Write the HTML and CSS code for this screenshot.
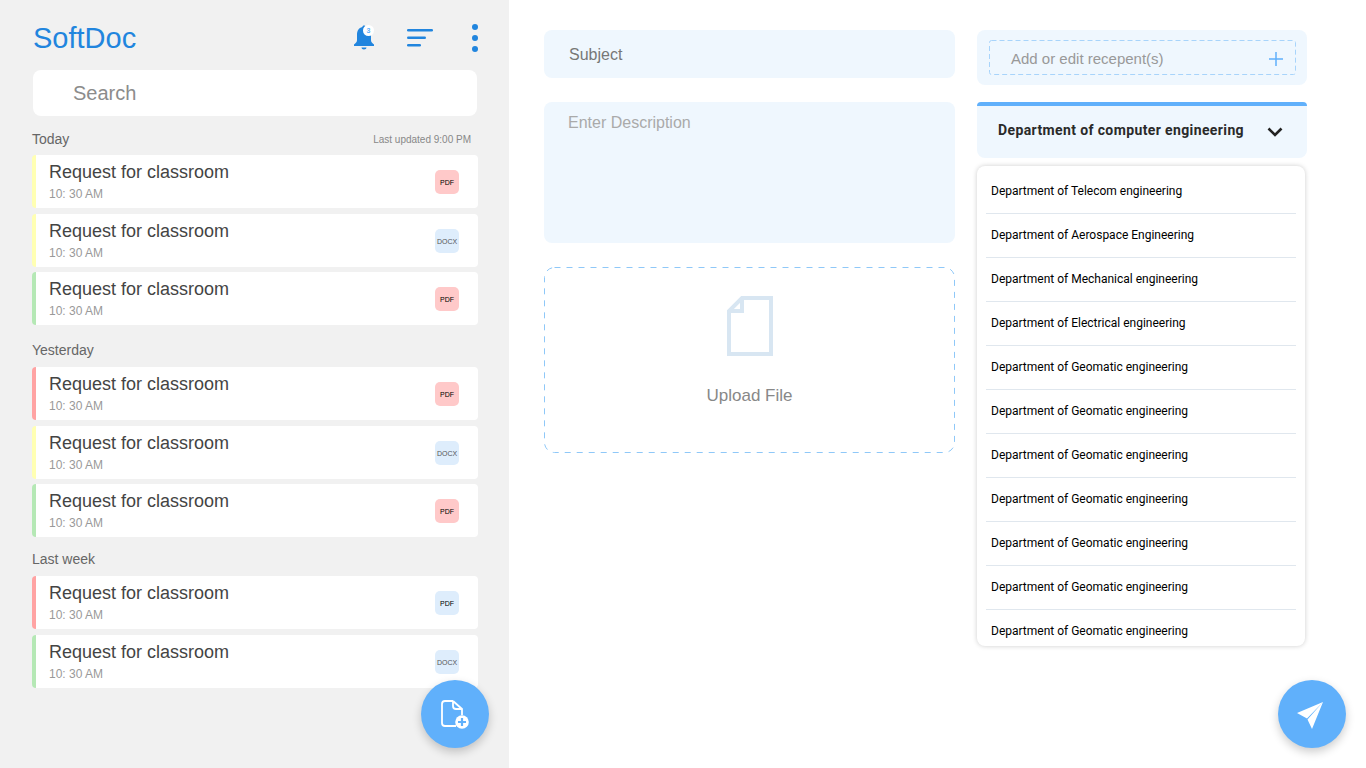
FILE: index.html
```html
<!DOCTYPE html>
<html lang="en">
    <head>
        <meta charset="UTF-8">
        <title>SoftDoc</title>
        <link rel="stylesheet" href="styles.css">
    </head>
    <body>
        <div class="sidebar">
            <div class="top">
                <h1 class="logo">SoftDoc</h1>
                <div class="bell">
                    <svg width="24" height="28" viewBox="0 0 24 28"><path fill="#2185de" d="M12 1.500c1 0 1.600.7 1.700 1.600 3.600.9 5.300 4 5.300 7.600v5.600c0 1.800 1.300 3 3 4.200v1.500H2v-1.500c1.700-1.200 3-2.400 3-4.200v-5.600c0-3.600 1.700-6.700 5.300-7.600.1-.9.7-1.600 1.700-1.600zM9.500 23.500h5c0 1.200-1.100 2-2.500 2s-2.500-.8-2.500-2z"/></svg>
                    <span class="badge">3</span>
                </div>
                <svg class="sort" width="28" height="20" viewBox="0 0 28 20"><g fill="#2185de"><rect y="1" width="26" height="2.600" rx="1.300"/><rect y="8.500" width="19" height="2.600" rx="1.300"/><rect y="16" width="14" height="2.600" rx="1.300"/></g></svg>
                <svg class="dots" width="8" height="28" viewBox="0 0 8 28"><g fill="#2185de"><circle cx="4" cy="3" r="3"/><circle cx="4" cy="14" r="3"/><circle cx="4" cy="25" r="3"/></g></svg>
            </div>

            <div class="search">Search</div>

            <div class="group-head first">
                <span>Today</span>
                <span class="updated">Last updated 9:00 PM</span>
            </div>
            <div class="card yellow"><div class="card-text"><h3>Request for classroom</h3><p>10: 30 AM</p></div><span class="tag pdf">PDF</span></div>
            <div class="card yellow"><div class="card-text"><h3>Request for classroom</h3><p>10: 30 AM</p></div><span class="tag docx">DOCX</span></div>
            <div class="card green"><div class="card-text"><h3>Request for classroom</h3><p>10: 30 AM</p></div><span class="tag pdf">PDF</span></div>

            <div class="group-head"><span>Yesterday</span></div>
            <div class="card red"><div class="card-text"><h3>Request for classroom</h3><p>10: 30 AM</p></div><span class="tag pdf">PDF</span></div>
            <div class="card yellow"><div class="card-text"><h3>Request for classroom</h3><p>10: 30 AM</p></div><span class="tag docx">DOCX</span></div>
            <div class="card green"><div class="card-text"><h3>Request for classroom</h3><p>10: 30 AM</p></div><span class="tag pdf">PDF</span></div>

            <div class="group-head last"><span>Last week</span></div>
            <div class="card red"><div class="card-text"><h3>Request for classroom</h3><p>10: 30 AM</p></div><span class="tag pdf-blue">PDF</span></div>
            <div class="card green"><div class="card-text"><h3>Request for classroom</h3><p>10: 30 AM</p></div><span class="tag docx">DOCX</span></div>

            <button class="fab fab-new">
                <svg width="32" height="30" viewBox="0 0 32 30"><path fill="none" stroke="#fff" stroke-width="1.800" d="M14 2H6a3 3 0 0 0-3 3v19a3 3 0 0 0 3 3h11M14 2l9 8v6M14 2v5a3 3 0 0 0 3 3h6"/><circle cx="23" cy="23" r="6.800" fill="#fff"/><path stroke="#60b0fb" stroke-width="2.200" d="M23 19v8M19 23h8"/></svg>
            </button>
        </div>

        <div class="main">
            <div class="form">
                <div class="subject">Subject</div>
                <div class="description">Enter Description</div>
                <div class="upload">
                    <svg class="frame" width="411" height="186"><rect x=".5" y=".5" width="410" height="185" rx="10" fill="none" stroke="#8fc8f8" stroke-dasharray="6 6"/></svg>
                    <svg width="46" height="60" viewBox="0 0 46 60"><path fill="none" stroke="#d8e6f2" stroke-width="4" d="M15 2h29v56H2V15zM15 2v13H2"/></svg>
                    <span>Upload File</span>
                </div>
            </div>

            <div class="side">
                <div class="recipients">
                    <div class="recipients-inner">
                        <svg class="frame" width="307" height="35"><rect x=".5" y=".5" width="306" height="34" rx="2" fill="none" stroke="#a8d4fb" stroke-dasharray="5 3"/></svg>
                        <span>Add or edit recepent(s)</span>
                        <svg width="14" height="14" viewBox="0 0 14 14"><path stroke="#60b0fb" stroke-width="1.500" d="M7 0v14M0 7h14"/></svg>
                    </div>
                </div>

                <div class="dept-head">
                    <span>Department of computer engineering</span>
                    <svg width="16" height="10" viewBox="0 0 16 10"><path fill="none" stroke="#222" stroke-width="2.600" d="M1.500 1.500 8 8l6.500-6.500"/></svg>
                </div>

                <div class="dept-list">
                    <div class="dept">Department of Telecom engineering</div>
                    <div class="dept">Department of Aerospace Engineering</div>
                    <div class="dept">Department of Mechanical engineering</div>
                    <div class="dept">Department of Electrical engineering</div>
                    <div class="dept">Department of Geomatic engineering</div>
                    <div class="dept">Department of Geomatic engineering</div>
                    <div class="dept">Department of Geomatic engineering</div>
                    <div class="dept">Department of Geomatic engineering</div>
                    <div class="dept">Department of Geomatic engineering</div>
                    <div class="dept">Department of Geomatic engineering</div>
                    <div class="dept">Department of Geomatic engineering</div>
                </div>
            </div>

            <button class="fab fab-send">
                <svg width="30" height="30" viewBox="0 0 30 30"><path fill="#fff" d="M26 3 0 14l10 5.500zM26 3 10.500 20.500 15 30z"/></svg>
            </button>
        </div>
    </body>
</html>
```

FILE: styles.css
```css
html, body{
    margin: 0;
    padding: 0;
    height: 100%;
    overflow: hidden;
    font-family: "Liberation Sans", Arial, sans-serif;
}

body{
    display: flex;
    background: #fff;
}

h1,h3,p{
    margin: 0;
}

.sidebar{
    position: relative;
    width: 509px;
    height: 768px;
    box-sizing: border-box;
    padding: 0 31px 0 32px;
    background: #f1f1f1;
}

.top{
    display: flex;
    align-items: center;
    height: 70px;
    padding-top: 5px;
    box-sizing: border-box;
}

.logo{
    flex: 1;
    margin-left: 1px;
    padding-top: 2px;
    font-size: 29px;
    font-weight: normal;
    color: #2185de;
}

.bell{
    position: relative;
    display: flex;
    margin-right: 31px;
}

.badge{
    position: absolute;
    top: 1px;
    left: 11px;
    width: 11px;
    height: 11px;
    border-radius: 50%;
    background: #fff;
    color: #60b0fb;
    font-size: 7px;
    font-weight: bold;
    line-height: 11px;
    text-align: center;
}

.sort{
    margin-right: 36px;
}

.dots{
    margin-right: -1px;
}

.search{
    height: 46px;
    margin: 0 1px;
    padding-left: 40px;
    border-radius: 8px;
    background: #fff;
    color: #8c8c8c;
    font-size: 20px;
    line-height: 46px;
}

.group-head{
    display: flex;
    justify-content: space-between;
    align-items: center;
    height: 17px;
    box-sizing: border-box;
    margin: 17px 0 8px;
    padding-bottom: 2px;
    color: #666;
    font-size: 14px;
}

.group-head.first{
    margin: 14px 0 8px;
    padding-bottom: 0;
}

.group-head.last{
    margin-top: 14px;
}

.updated{
    margin: 2px 7px 0 0;
    color: #888;
    font-size: 10px;
}

.card{
    display: flex;
    align-items: center;
    justify-content: space-between;
    height: 53px;
    box-sizing: border-box;
    margin-bottom: 5.5px;
    padding: 0 19px 0 13px;
    border-left: 4px solid #ffffb3;
    border-radius: 4px;
    background: #fff;
}

.card.green{
    border-left-color: #b5e8b5;
}

.card.red{
    border-left-color: #ffa3a3;
}

.card-text{
    padding-bottom: 1px;
}

.card h3{
    font-size: 18px;
    font-weight: normal;
    color: #444;
    line-height: 22px;
}

.card p{
    margin-top: 4px;
    font-size: 12px;
    line-height: 14px;
    color: #999;
}

.tag{
    width: 24px;
    height: 24px;
    margin-top: 1px;
    border-radius: 5px;
    font-size: 7px;
    line-height: 25px;
    text-align: center;
}

.tag.pdf{
    background: #ffc9c9;
    color: #000;
}

.tag.docx{
    background: #deedfc;
    color: #555;
}

.tag.pdf-blue{
    background: #deedfc;
    color: #000;
}

.fab{
    position: absolute;
    display: flex;
    align-items: center;
    justify-content: center;
    width: 68px;
    height: 68px;
    padding: 0;
    border: 0;
    border-radius: 50%;
    background: #60b0fb;
    box-shadow: 0 4px 10px rgba(0, 0, 0, .2);
}

.fab-new{
    left: 421px;
    top: 680px;
}

.fab-send{
    right: 20px;
    top: 680px;
}

.main{
    flex: 1;
    display: flex;
    gap: 22px;
    padding: 30px 0 0 35px;
}

.form{
    display: flex;
    flex-direction: column;
    gap: 24px;
    width: 411px;
}

.subject{
    height: 48px;
    padding-left: 25px;
    border-radius: 8px;
    background: #eff7fe;
    color: #777;
    font-size: 16px;
    line-height: 50px;
}

.description{
    height: 141px;
    box-sizing: border-box;
    padding: 12px 24px;
    border-radius: 8px;
    background: #eff7fe;
    color: #aaa;
    font-size: 16px;
}

.upload{
    position: relative;
    display: flex;
    flex-direction: column;
    align-items: center;
    height: 186px;
    box-sizing: border-box;
    padding-top: 29px;
    color: #888;
    font-size: 17px;
}

.upload span{
    margin-top: 30px;
}

.frame{
    position: absolute;
    top: 0;
    left: 0;
}

.side{
    width: 330px;
}

.recipients{
    height: 55px;
    box-sizing: border-box;
    padding: 10px 11px 10px 12px;
    border-radius: 8px;
    background: #eff7fe;
}

.recipients-inner{
    position: relative;
    display: flex;
    justify-content: space-between;
    align-items: center;
    height: 35px;
    box-sizing: border-box;
    padding: 2px 13px 0 22px;
    color: #999;
    font-size: 15px;
}

.dept-head{
    display: flex;
    justify-content: space-between;
    align-items: center;
    height: 56px;
    box-sizing: border-box;
    margin-top: 17px;
    padding: 0 24px 5px 21px;
    border-top: 4px solid #60b0fb;
    border-radius: 4px 4px 8px 8px;
    background: #eff7fe;
    color: #2a2a2a;
    font-family: Roboto, sans-serif;
    font-size: 14px;
    font-weight: bold;
    letter-spacing: .38px;
}

.dept-head svg{
    margin-top: 5px;
}

.dept-list{
    height: 480px;
    width: 328px;
    box-sizing: border-box;
    margin-top: 8px;
    padding: 4px 9px 0;
    overflow: hidden;
    border-radius: 8px;
    background: #fff;
    box-shadow: 0 0 5px rgba(0, 0, 0, .2);
}

.dept{
    height: 44px;
    box-sizing: border-box;
    padding-left: 5px;
    border-bottom: 1px solid #e0e7ee;
    color: #000;
    font-family: Roboto, sans-serif;
    font-size: 12px;
    line-height: 43px;
}
```
